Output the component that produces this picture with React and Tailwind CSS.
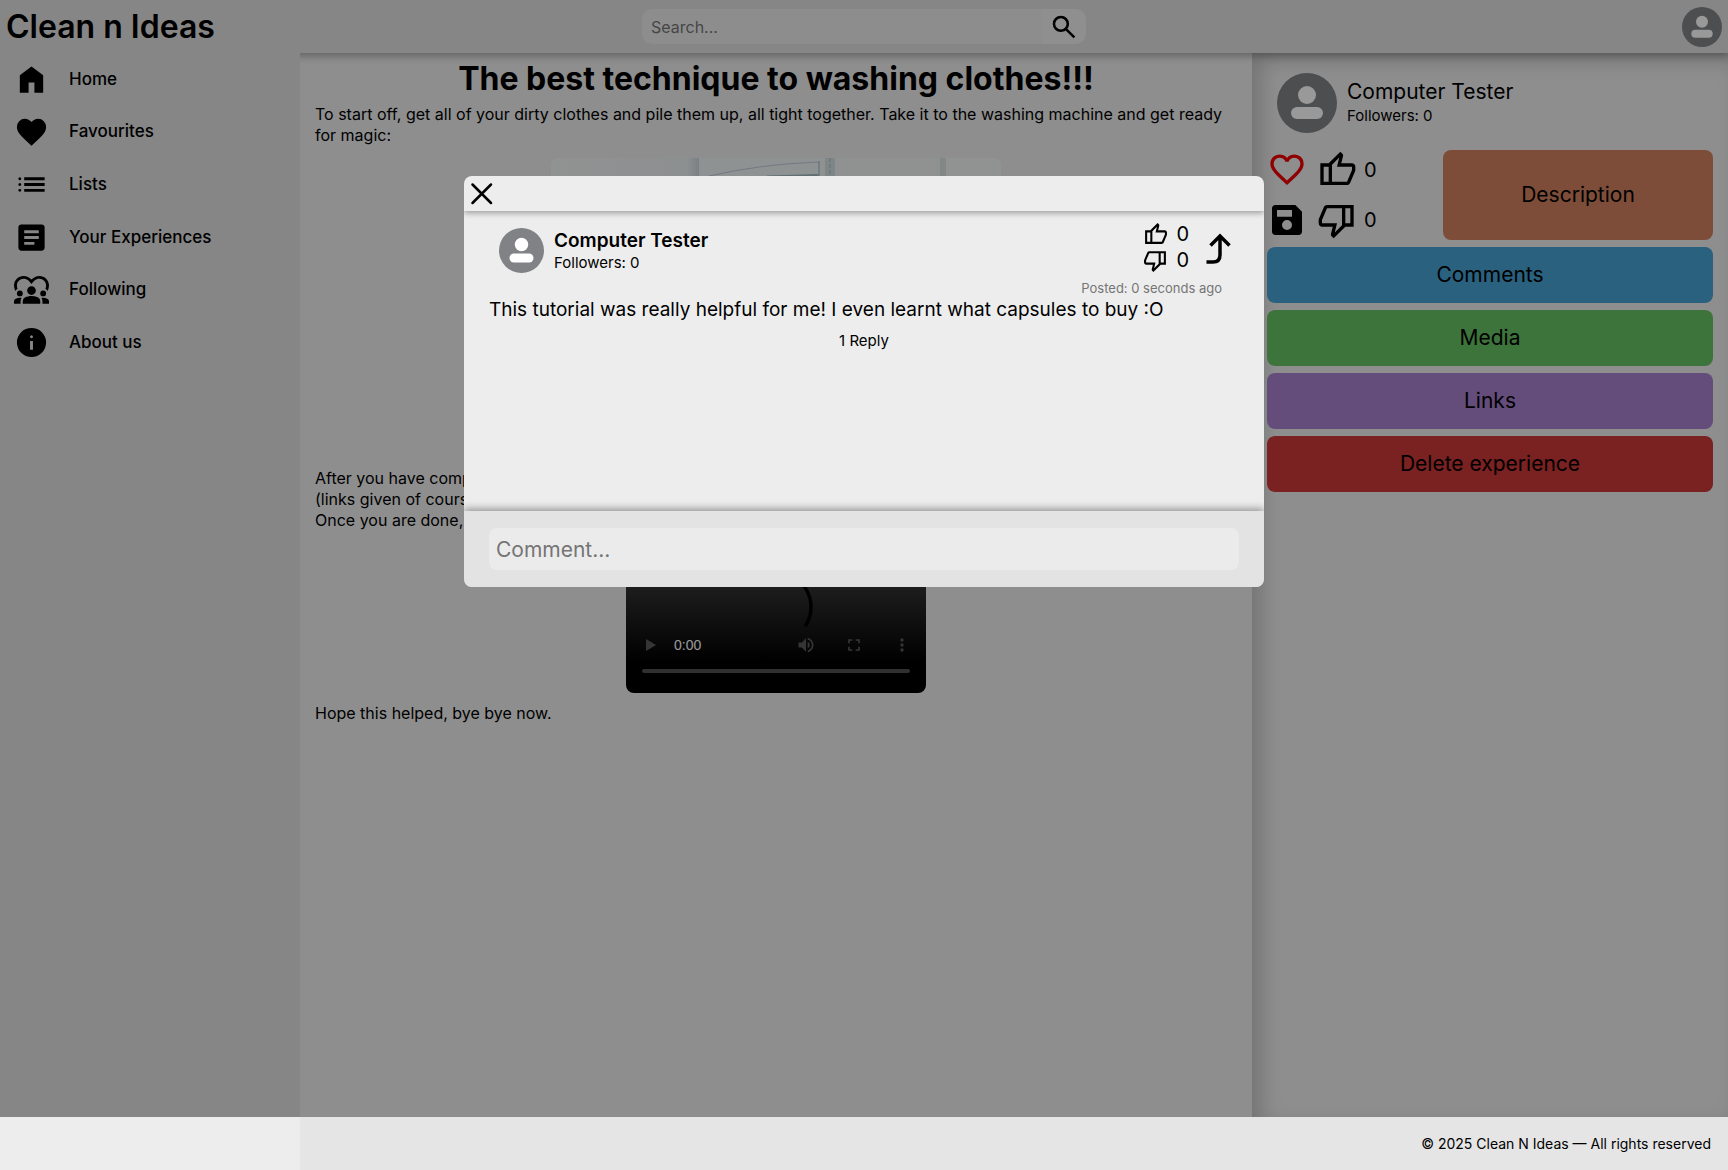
import React from "react";

const PATHS = {
  home: "M160-120v-480l320-240 320 240v480H560v-280H400v280H160Z",
  heart:
    "m480-120-58-52q-101-91-167-157T150-447.5Q111-500 95.5-544T80-634q0-94 63-157t157-63q52 0 99 22t81 62q34-40 81-62t99-22q94 0 157 63t63 157q0 46-15.5 90T810-447.5Q771-395 705-329T538-172l-58 52Z",
  heartOutline:
    "m480-120-58-52q-101-91-167-157T150-447.5Q111-500 95.5-544T80-634q0-94 63-157t157-63q52 0 99 22t81 62q34-40 81-62t99-22q94 0 157 63t63 157q0 46-15.5 90T810-447.5Q771-395 705-329T538-172l-58 52Zm0-108q96-86 158-147.5t98-107q36-45.5 50-81t14-70.5q0-60-40-100t-100-40q-47 0-87 26.5T518-680h-76q-15-41-55-67.5T300-774q-60 0-100 40t-40 100q0 35 14 70.5t50 81q36 45.5 98 107T480-228Z",
  list: "M280-600v-80h560v80H280Zm0 160v-80h560v80H280Zm0 160v-80h560v80H280ZM160-600q-17 0-28.5-11.5T120-640q0-17 11.5-28.5T160-680q17 0 28.5 11.5T200-640q0 17-11.5 28.5T160-600Zm0 160q-17 0-28.5-11.5T120-480q0-17 11.5-28.5T160-520q17 0 28.5 11.5T200-480q0 17-11.5 28.5T160-440Zm0 160q-17 0-28.5-11.5T120-320q0-17 11.5-28.5T160-360q17 0 28.5 11.5T200-320q0 17-11.5 28.5T160-280Z",
  article:
    "M280-280h280v-80H280v80Zm0-160h400v-80H280v80Zm0-160h400v-80H280v80Zm-80 480q-33 0-56.5-23.5T120-200v-560q0-33 23.5-56.5T200-840h560q33 0 56.5 23.5T840-760v560q0 33-23.5 56.5T760-120H200Z",
  info: "M440-280h80v-240h-80v240Zm40-320q17 0 28.5-11.5T520-640q0-17-11.5-28.5T480-680q-17 0-28.5 11.5T440-640q0 17 11.5 28.5T480-600Zm0 520q-83 0-156-31.5T197-197q-54-54-85.5-127T80-480q0-83 31.5-156T197-763q54-54 127-85.5T480-880q83 0 156 31.5T763-763q54 54 85.5 127T880-480q0 83-31.5 156T763-197q-54 54-127 85.5T480-80Z",
  search:
    "M784-120 532-372q-30 24-69 38t-83 14q-109 0-184.5-75.5T120-580q0-109 75.5-184.5T380-840q109 0 184.5 75.5T640-580q0 44-14 83t-38 69l252 252-56 56ZM380-400q75 0 127.5-52.5T560-580q0-75-52.5-127.5T380-760q-75 0-127.5 52.5T200-580q0 75 52.5 127.5T380-400Z",
  up: "M720-120H280v-520l280-280 50 50q7 7 11.5 19t4.5 23v14l-44 174h258q32 0 56 24t24 56v80q0 7-2 15t-4 15L794-168q-9 20-30 34t-44 14Zm-360-80h360l120-280v-80H480l54-220-174 174v406Zm-80-440v80H160v360h120v80H80v-520h200Z",
  down: "M240-840h440v520L400-40l-50-50q-7-7-11.5-19t-4.5-23v-14l44-174H120q-32 0-56-24t-24-56v-80q0-7 2-15t4-15l120-282q9-20 30-34t44-14Zm360 80H240L120-480v80h360l-54 220 174-174v-406Zm80 440v-80h120v-360H680v-80h200v520H680Z",
  save: "M840-680v480q0 33-23.5 56.5T760-120H200q-33 0-56.5-23.5T120-200v-560q0-33 23.5-56.5T200-840h480l160 160ZM480-240q50 0 85-35t35-85q0-50-35-85t-85-35q-50 0-85 35t-35 85q0 50 35 85t85 35ZM240-560h360v-160H240v160Z",
};

function Icon({ name, className }) {
  return (
    <svg viewBox="0 -960 960 960" fill="currentColor" className={className} aria-hidden="true">
      <path d={PATHS[name]} />
    </svg>
  );
}

function FollowingIcon({ className }) {
  return (
    <svg viewBox="0 0 24 24" fill="currentColor" className={className} aria-hidden="true">
      <circle cx="4" cy="14" r="2" />
      <path d="M1.22 17.58A2.01 2.01 0 0 0 0 19.43V21h4.5v-1.61c0-.83.23-1.61.63-2.29C4.76 17.04 4.39 17 4 17c-.99 0-1.93.21-2.78.58z" />
      <circle cx="20" cy="14" r="2" />
      <path d="M22.78 17.58A6.95 6.95 0 0 0 20 17c-.39 0-.76.04-1.13.1.4.68.63 1.46.63 2.29V21H24v-1.57c0-.81-.48-1.53-1.22-1.85zM16.24 16.65A10.46 10.46 0 0 0 12 15.75c-1.63 0-3.07.39-4.24.9A2.99 2.99 0 0 0 6 19.39V21h12v-1.61c0-1.18-.68-2.26-1.76-2.74z" />
      <path d="M9 12c0 1.66 1.34 3 3 3s3-1.34 3-3-1.34-3-3-3-3 1.34-3 3zM2.48 10.86C2.17 10.1 2 9.36 2 8.6 2 6.02 4.02 4 6.6 4c2.68 0 3.82 1.74 5.4 3.59C13.57 5.76 14.7 4 17.4 4 19.98 4 22 6.02 22 8.6c0 .76-.17 1.5-.48 2.26.65.31 1.18.82 1.53 1.44.6-1.2.95-2.42.95-3.7C24 4.9 21.1 2 17.4 2c-2.09 0-4.09.97-5.4 2.51C10.69 2.97 8.69 2 6.6 2 2.9 2 0 4.9 0 8.6c0 1.28.35 2.5.96 3.7.35-.62.88-1.13 1.52-1.44z" />
    </svg>
  );
}

function Avatar({ className }) {
  return (
    <svg viewBox="0 0 60 60" className={className} role="img" aria-label="Profile picture">
      <circle cx="30" cy="30" r="30" fill="#808285" />
      <circle cx="30" cy="22" r="9" fill="#fff" />
      <rect x="14" y="34" width="32" height="12" rx="6" fill="#fff" />
    </svg>
  );
}

const NAV = [
  ["Home", "home"],
  ["Favourites", "heart"],
  ["Lists", "list"],
  ["Your Experiences", "article"],
  ["Following", null],
  ["About us", "info"],
];

function Header() {
  return (
    <header className="relative z-10 flex h-[53px] items-center justify-between bg-[#dfdfdf] px-1.5 shadow-[0_3px_8px_rgba(0,0,0,0.3)]">
      <h1 className="flex-1 text-[32px] font-semibold leading-10">
        <a href="#home">Clean n Ideas</a>
      </h1>
      <form className="flex h-[35px] w-[444px] overflow-hidden rounded-[10px]" onSubmit={(e) => e.preventDefault()}>
        <input
          type="text"
          aria-label="Search"
          placeholder="Search..."
          className="min-w-0 flex-1 bg-[#ebebeb] px-[9px] text-base outline-none placeholder:text-[#757575]"
        />
        <button type="submit" aria-label="Search" className="flex w-[44px] items-center justify-center bg-[#eeeeee]">
          <Icon name="search" className="size-[30px]" />
        </button>
      </form>
      <div className="flex flex-1 justify-end">
        <button type="button" aria-label="Account">
          <Avatar className="size-10" />
        </button>
      </div>
    </header>
  );
}

function Sidebar() {
  return (
    <nav className="relative z-10 bg-[#dfdfdf]">
      <ul className="flex h-[316px] flex-col">
        {NAV.map(([label, icon]) => (
          <li key={label} className="flex-1">
            <a href="#" className="flex h-full items-center gap-5 pl-3.5 text-[17px] font-medium">
              {icon ? <Icon name={icon} className="size-[35px]" /> : <FollowingIcon className="size-[35px]" />}
              {label}
            </a>
          </li>
        ))}
      </ul>
    </nav>
  );
}

function Photo() {
  return (
    <svg viewBox="0 0 450 300" className="mx-auto mb-2.5 mt-3 block w-[450px] max-w-full rounded-lg bg-[#f0f4f4]" role="img" aria-label="Washing machine">
      <defs>
        <linearGradient id="wall" x1="0" x2="1">
          <stop offset="0" stopColor="#f2f4f4" />
          <stop offset="0.92" stopColor="#ebf0f1" />
          <stop offset="1" stopColor="#cad5da" />
        </linearGradient>
      </defs>
      <rect width="148" height="300" fill="url(#wall)" />
      <rect x="148" width="122" height="300" fill="#eef3f3" />
      <path d="M158 18Q210 6 268 4" fill="none" stroke="#c3c7da" strokeWidth="1" />
      <path d="M216 17.500L268 16v3h-52z" fill="#9db9bf" />
      <path d="M268 3v15" stroke="#b5c8cc" strokeWidth="1.500" />
      <rect x="274" width="10" height="300" fill="#d2dfe1" />
      <path d="M279 0v300" stroke="#b9ccd0" strokeWidth="2" strokeDasharray="4 2" />
      <rect x="389" width="6" height="300" fill="#d9e3e2" />
      <rect x="395" width="55" height="300" fill="#f2f5f4" />
      <circle cx="210" cy="180" r="90" fill="#d5dee0" stroke="#a9bcc2" strokeWidth="10" />
    </svg>
  );
}

function VideoPlayer() {
  return (
    <div className="relative mx-auto mb-2.5 mt-3 flex h-[150px] w-[300px] flex-col justify-end overflow-hidden rounded-lg bg-linear-to-b/srgb from-[#3a3a3a] from-20% to-black to-80% px-4 pb-5">
      <svg viewBox="0 0 80 80" className="absolute inset-x-0 top-6 mx-auto size-20" fill="none" aria-hidden="true">
        <path d="M40 5A35 35 0 0 1 70 58" stroke="#000" strokeWidth="3.500" strokeLinecap="round" />
      </svg>
      <div className="flex h-9 items-center">
        <button type="button" aria-label="Play" className="text-[#595959]">
          <svg viewBox="0 0 18 18" className="size-[18px]" fill="currentColor">
            <path d="M4 3v12l10-6z" />
          </svg>
        </button>
        <span className="ml-3.5 flex-1 font-['Liberation_Sans',sans-serif] text-sm text-white">0:00</span>
        <button type="button" aria-label="Mute" className="mr-7 text-[#595959]">
          <svg viewBox="0 0 24 24" className="size-5" fill="currentColor">
            <path d="M3 9v6h4l5 5V4L7 9H3zm13.500 3A4.500 4.500 0 0 0 14 7.970v8.050c1.480-.73 2.500-2.250 2.500-4.020zM14 3.230v2.060c2.890.86 5 3.540 5 6.710s-2.110 5.850-5 6.710v2.060c4.010-.91 7-4.490 7-8.770s-2.990-7.860-7-8.770z" />
          </svg>
        </button>
        <button type="button" aria-label="Full screen" className="mr-7 text-[#595959]">
          <svg viewBox="0 0 24 24" className="size-5" fill="currentColor">
            <path d="M7 14H5v5h5v-2H7v-3zm-2-4h2V7h3V5H5v5zm12 7h-3v2h5v-5h-2v3zM14 5v2h3v3h2V5h-5z" />
          </svg>
        </button>
        <button type="button" aria-label="More options" className="-mr-0.5 text-[#595959]">
          <svg viewBox="0 0 24 24" className="size-5" fill="currentColor">
            <circle cx="12" cy="6" r="2" />
            <circle cx="12" cy="12" r="2" />
            <circle cx="12" cy="18" r="2" />
          </svg>
        </button>
      </div>
      <input
        type="range"
        aria-label="Seek"
        defaultValue="0"
        className="mt-1.5 h-1 w-full appearance-none rounded-full bg-[#505050] [&::-webkit-slider-thumb]:size-0 [&::-webkit-slider-thumb]:appearance-none"
      />
    </div>
  );
}

function Article() {
  return (
    <main className="bg-[#ededed] px-[15px] pt-[5px] text-base leading-[21px]">
      <h2 className="mb-[5px] text-center text-[32px] font-bold leading-[41px]">The best technique to washing clothes!!!</h2>
      <p>
        To start off, get all of your dirty clothes and pile them up, all tight together. Take it to the washing machine
        and get ready for magic:
      </p>
      <Photo />
      <p>After you have completed that step, put in the washing capsules</p>
      <p>(links given of course) and set it going.</p>
      <p>Once you are done, watch this video:</p>
      <VideoPlayer />
      <p>Hope this helped, bye bye now.</p>
    </main>
  );
}

const ACTIONS = [
  ["Comments", "bg-[#46a2d4]"],
  ["Media", "bg-[#67c164]"],
  ["Links", "bg-[#a780cd]"],
  ["Delete experience", "bg-[#cb3737]"],
];

function Details() {
  return (
    <aside className="bg-[#ededed] px-[15px] pt-5 shadow-[inset_10px_8px_20px_rgba(0,0,0,0.18)]">
      <div className="flex items-center gap-2.5 pl-2.5">
        <Avatar className="size-[60px]" />
        <div className="pt-0.5">
          <p className="text-[21px] leading-6">Computer Tester</p>
          <p className="text-[15px] leading-6">Followers: 0</p>
        </div>
      </div>
      <div className="mt-[17px] flex">
        <div className="grid w-44 grid-cols-[40px_1fr] content-between gap-x-2.5">
          <button type="button" aria-label="Favourite" className="text-[#ee0000]">
            <Icon name="heartOutline" className="size-10" />
          </button>
          <button type="button" className="flex items-center gap-[7px] text-xl">
            <Icon name="up" className="size-10" />0
          </button>
          <button type="button" aria-label="Save">
            <Icon name="save" className="size-10" />
          </button>
          <button type="button" className="flex items-center gap-[7px] text-xl">
            <Icon name="down" className="size-10" />0
          </button>
        </div>
        <button type="button" className="h-[90px] flex-1 rounded-lg bg-[#d08061] text-[21px]">
          Description
        </button>
      </div>
      <div className="mt-[7px] flex flex-col gap-[7px]">
        {ACTIONS.map(([label, color]) => (
          <button key={label} type="button" className={`h-14 rounded-lg text-[21px] ${color}`}>
            {label}
          </button>
        ))}
      </div>
    </aside>
  );
}

function CommentsDialog() {
  return (
    <div className="absolute inset-0 z-20 flex items-start justify-center bg-black/40 pt-44">
      <div role="dialog" aria-label="Comments" className="w-[800px] max-w-full overflow-hidden rounded-lg bg-[#ededed]">
        <div className="relative flex h-[35px] items-center pl-1.5 shadow-[0_2px_6px_rgba(0,0,0,0.35)]">
          <button type="button" aria-label="Close">
            <svg viewBox="0 0 24 24" className="size-6" fill="none" stroke="#000" strokeWidth="2.500" strokeLinecap="round">
              <path d="M2.500 2.500l18.500 18.500M21 2.500L2.500 21" />
            </svg>
          </button>
        </div>
        <div className="h-[300px] px-[25px] pt-2.5">
          <div className="flex items-start">
            <Avatar className="ml-2.5 mt-[7px] size-[45px]" />
            <div className="ml-2.5 flex-1 pt-2">
              <p className="text-[19px] font-semibold leading-6">Computer Tester</p>
              <p className="text-[15px] leading-5">Followers: 0</p>
            </div>
            <div className="flex flex-col text-xl leading-[26px]">
              <button type="button" className="flex items-center gap-2">
                <Icon name="up" className="size-[25px]" />0
              </button>
              <button type="button" className="flex items-center gap-2">
                <Icon name="down" className="size-[25px]" />0
              </button>
            </div>
            <button type="button" aria-label="Reply" className="ml-3.5 mr-1.5 mt-2.5">
              <svg viewBox="0 0 30 34" className="h-[34px] w-[30px]" fill="none" stroke="#000" strokeWidth="3.500">
                <path d="M3.500 31H10q7 0 7-7V5.500M7.500 14.500l9.500-9.500 9.500 9.500" />
              </svg>
            </button>
          </div>
          <p className="mt-[5px] pr-[17px] text-right text-[13px] leading-5 text-[#757575]">Posted: 0 seconds ago</p>
          <p className="text-[19px] leading-6">
            This tutorial was really helpful for me! I even learnt what capsules to buy :O
          </p>
          <div className="mt-1.5 text-center">
            <button type="button" className="text-[15px] leading-5">
              1 Reply
            </button>
          </div>
        </div>
        <div className="relative bg-[#e3e3e3] px-[25px] py-[17px] shadow-[0_-2px_8px_rgba(0,0,0,0.4)]">
          <input
            type="text"
            aria-label="Comment"
            placeholder="Comment..."
            className="block h-[42px] w-full rounded-lg bg-[#ebebeb] px-[7px] text-[21px] outline-none placeholder:text-[#757575]"
          />
        </div>
      </div>
    </div>
  );
}

export default function App() {
  return (
    <div className="flex min-h-screen flex-col font-[Inter,sans-serif] text-black">
      <div className="relative flex flex-1 flex-col">
        <Header />
        <div className="grid flex-1 grid-cols-[300px_2fr_1fr]">
          <Sidebar />
          <Article />
          <Details />
        </div>
        <CommentsDialog />
      </div>
      <footer className="flex h-[53px] bg-[#ededed]">
        <div className="w-[300px]" />
        <p className="flex flex-1 items-center justify-end bg-[#e5e5e5] pr-[17px] text-sm">
          © 2025 Clean N Ideas — All rights reserved
        </p>
      </footer>
    </div>
  );
}
